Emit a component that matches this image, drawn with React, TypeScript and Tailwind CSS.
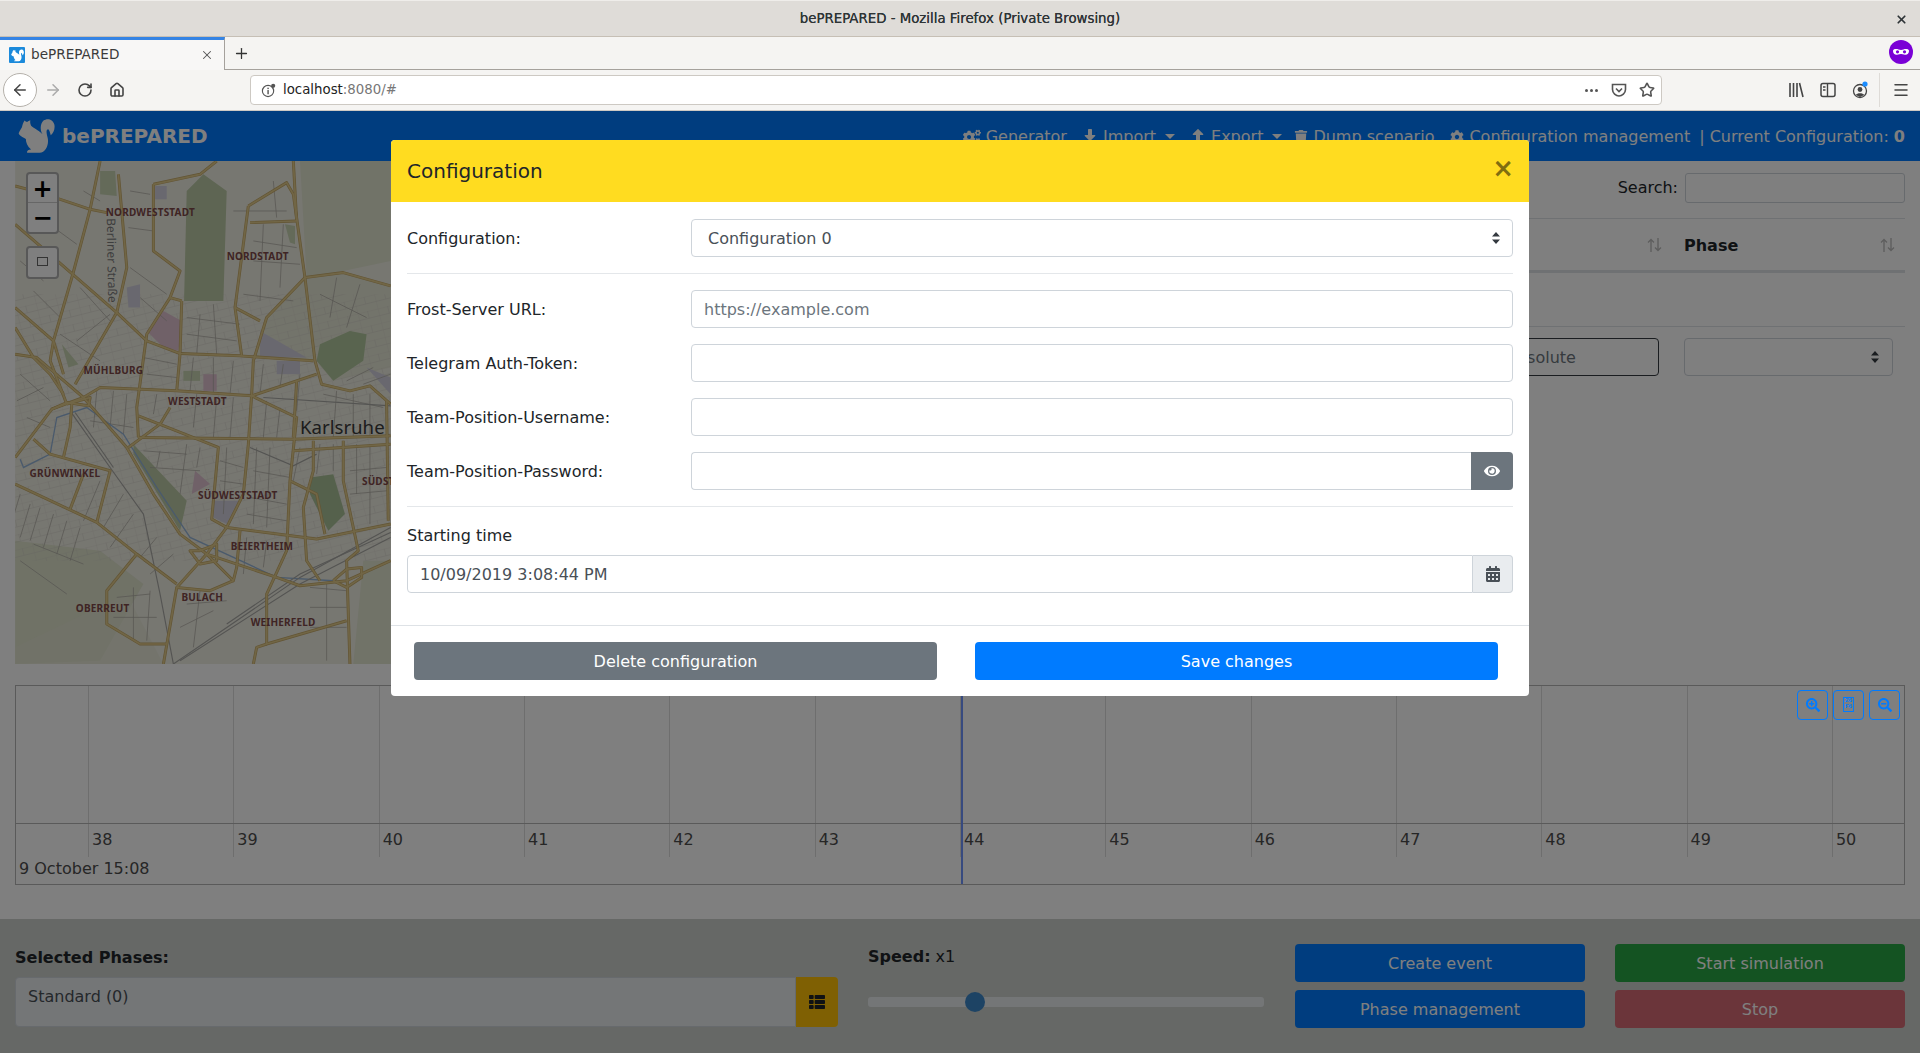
import React from "react";
import { ArrowLeft, ArrowRight, RotateCw, Home, X, Plus, Menu, Star } from "lucide-react";
import { FaCogs, FaDownload, FaUpload, FaTrash, FaCog, FaEye, FaCalendarAlt, FaSearchPlus, FaSearchMinus, FaThList } from "react-icons/fa";

const Squirrel = ({ className = "", fill = "#fff" }: { className?: string; fill?: string }) => (
  <svg viewBox="22 22 113 110" className={className}>
    <path fill={fill} d="M103 78C88 68 88 40 100 30C110 22 128 24 133 42C136 55 130 70 122 75C120 65 118 58 114 56C108 56 108 66 112 80C118 100 108 128 88 128L50 128C48 124 52 118 62 118C50 108 46 96 46 86C40 84 30 78 25 72C22 68 28 60 34 50C36 42 38 36 42 30C46 34 48 34 50 34C54 32 56 30 60 30C58 36 60 40 62 46C70 54 90 62 103 78Z" />
  </svg>
);

const mainRoads = [
  "300,0 270,145 218,340 160,540 150,600 200,730",
  "45,75 120,95 270,145 320,155",
  "355,40 380,320 350,455 225,670",
  "45,190 218,340 350,455 440,540 540,578 720,585 940,600",
  "460,70 460,270 540,330 510,410 440,520 410,740 415,830",
  "460,70 600,40 650,0",
  "545,420 540,578 530,690",
  "510,410 545,420",
  "745,135 705,440 725,585",
  "705,440 780,480",
  "745,135 860,65 880,100 915,350 945,600 965,670 1050,690 1110,675 1172,730",
  "750,185 890,180",
  "880,0 890,180",
  "915,350 1030,335 1172,375",
  "915,350 800,470 760,600 755,700 745,850 730,1000 680,1100 620,1180 530,1280 490,1510",
  "250,710 300,680 530,690 755,705 950,640",
  "45,580 110,590 250,710 155,745 45,890",
  "250,710 380,860 460,1000 540,1120 620,1180 830,1250 900,1275 1040,1260 1172,1200",
  "385,860 480,790 510,740",
  "415,830 880,835 1172,825",
  "415,765 655,860 635,1075 680,1100 950,1135 1172,1090",
  "755,705 890,770 870,960 860,1170 800,1300 800,1450 1040,1380",
  "890,660 880,830",
  "45,970 290,1085 410,1180 530,1270",
  "100,835 150,880 330,930 290,1085",
  "250,940 210,1045",
  "410,1180 320,1290 320,1390 420,1450 500,1450",
  "870,960 950,1000 975,1120",
  "940,840 940,930 910,1040 920,1200 960,1260",
  "1030,840 1030,960 1075,1170 1040,1200 1050,1510",
  "1160,720 1165,1080",
  "880,870 1172,850",
  "45,500 100,590 150,640 190,700",
  "45,440 160,540 190,640",
  "215,730 210,800 190,890",
  "620,1180 700,1260 710,1220 720,1110",
  "700,1260 630,1290 530,1280",
  "760,1510 770,1460 800,1450",
  "1000,1260 1040,1225 1085,1220 1085,1250 1040,1280 1000,1260",
  "155,745 200,725 265,735 270,710 200,730",
  "600,1170 650,1150 650,1200 600,1210 570,1170 600,1170",
];
const minor = [
  "250,90 300,120","120,170 230,250","60,300 130,360","100,390 180,470","240,380 330,480","180,520 300,600","230,540 330,460",
  "390,90 450,100","385,200 460,210","390,320 500,400","420,410 500,480","560,470 720,490","560,520 710,540","640,430 650,580",
  "600,460 590,580","700,150 860,150","760,240 890,260","760,300 900,310","730,400 880,420","820,60 830,170","790,190 780,420","850,190 840,380",
  "430,590 530,610","440,640 530,650","580,590 570,690","640,590 640,700","700,600 690,700","790,610 780,700","850,610 840,680","900,640 890,750",
  "290,690 280,800","340,690 330,800","380,700 370,820","270,780 400,800","60,640 150,720","50,720 130,680","80,770 150,800",
  "430,870 560,880","450,920 600,930","560,850 540,1000","600,860 590,920","480,870 470,920","660,900 730,920","660,960 730,970","680,860 670,1060",
  "770,860 760,1090","810,860 800,1100","760,930 870,950","750,1010 860,1030","740,1060 860,1080","900,860 880,960","960,850 950,940","1000,850 1000,930","1070,850 1070,1000","1110,850 1110,1090","1050,930 1160,920","1050,1000 1160,990",
  "60,1000 30,1100","90,1030 60,1130","120,1040 90,1140","160,1060 130,1160","200,1080 170,1180","240,1100 210,1200","100,1150 250,1210","300,960 250,1080","370,1000 310,1100","400,1060 330,1160","60,1200 200,1300",
  "430,1200 520,1260","470,1130 420,1190","520,1180 450,1240","350,1310 450,1300","340,1370 470,1370","400,1280 400,1440","450,1290 440,1440",
  "560,1330 680,1320","540,1400 640,1350","600,1290 580,1460","740,1130 730,1240","800,1140 790,1220","930,1280 1040,1290","930,1340 1040,1340","930,1400 1040,1400","980,1270 980,1500",
  "960,400 1100,470","1010,350 990,470","1080,370 1040,500","1120,620 1040,660","1172,640 1090,670","970,700 1150,740","1010,690 1000,830","1060,700 1060,830","1110,700 1110,830","800,720 790,830","840,740 830,830","650,710 640,830","700,710 690,830","590,700 580,800","470,700 460,760",
];
const rails = ["210,750 330,920 430,1060 480,1300 520,1510", "225,755 340,920", "520,1510 900,1250 1172,1100", "540,1500 900,1270 1172,1130", "680,1390 900,1240 1172,1115", "790,710 1172,735", "750,860 880,915 950,880"];

const MapLabel = ({ x, y, t }: { x: number; y: number; t: string }) => (
  <text x={x} y={y} fontFamily="'Noto Sans', sans-serif" fontWeight="700" fontSize="30" letterSpacing="0.6" fill="#7e4848">{t}</text>
);

const MapDrawing = () => (
  <svg viewBox="45 0 1500 1510" className="block w-[500px] h-[503px]">
    <defs>
      <pattern id="s1" width="62" height="44" patternUnits="userSpaceOnUse" patternTransform="rotate(-14)">
        <path d="M0 0H62M0 22H62M0 0V44M31 0V22" stroke="#cbc9c0" strokeWidth="2" fill="none" />
      </pattern>
    </defs>
    <rect x="45" width="1500" height="1510" fill="#efeee3" />
    <path d="M45 1140L300 1170L430 1270L300 1500L45 1510Z" fill="#e0e4cd" />
    <path d="M900 0H1172V300L1030 330L920 350Z" fill="#e2e6d1" />
    <path d="M800 470L915 350L1030 335L1172 375V620L1000 660L945 600L760 590Z" fill="#e7e8d7" />
    <path d="M1090 1200H1172V1510H1060Z" fill="#e2e6d1" />
    <path d="M380 1300L490 1510H45V1460Z" fill="#e4e6d2" opacity="0.6" />
    <rect x="45" y="400" width="1127" height="800" fill="url(#s1)" opacity="0.55" />
    <path d="M560 90L610 40L680 90L670 420L552 420Z" fill="#bccba6" />
    <path d="M950 600L960 550L1050 510L1100 520L1090 600L1000 660Z" fill="#b2c89e" />
    <path d="M400 850L560 1020L540 1110L400 880Z" fill="#bccba6" />
    <path d="M930 950L1000 940L1035 1060L985 1110L930 1000Z" fill="#abc299" />
    <path d="M300 30L345 30L350 105L300 100Z" fill="#c8d4b3" />
    <path d="M185 550L235 610L205 620Z" fill="#c8d4b3" />
    <path d="M855 190L885 195L885 250L870 245Z" fill="#c8d4b3" />
    <path d="M550 630H600V660H550Z" fill="#c8d4b3" />
    <path d="M440 510L490 450L545 480L535 570L490 560Z" fill="#e0c2d1" />
    <path d="M610 640H650V690H610Z" fill="#e0c2d1" />
    <path d="M585 930L630 970L575 1000Z" fill="#e0c2d1" />
    <path d="M640 1020H720L680 1090L640 1070Z" fill="#d3d1de" />
    <path d="M780 510L920 590L780 590Z" fill="#d3d1de" />
    <path d="M830 600H900V640H830Z" fill="#d3d1de" />
    <path d="M1100 620L1172 650V700Z" fill="#d3d1de" />
    <path d="M380 380L420 370L420 440L385 440Z" fill="#d3d1de" />
    <path d="M465 75H500V115H465Z" fill="#d3d1de" />
    {minor.map((p) => (
      <polyline key={p} points={p} fill="none" stroke="#aeaca3" strokeWidth="2.2" />
    ))}
    <polyline points="60,895 70,920 150,880 170,770 260,740 370,820 470,980 570,1130 830,1250 1000,1260" fill="none" stroke="#94b4d8" strokeWidth="4" />
    {rails.map((p) => (
      <polyline key={p} points={p} fill="none" stroke="#a9a9a5" strokeWidth="3.5" />
    ))}
    {mainRoads.map((p) => (
      <polyline key={p} points={p} fill="none" stroke="#c4a968" strokeWidth="9" strokeLinejoin="round" />
    ))}
    {mainRoads.map((p) => (
      <polyline key={`i${p}`} points={p} fill="none" stroke="#e3cc8c" strokeWidth="5" strokeLinejoin="round" />
    ))}
    <MapLabel x={317} y={165} t="NORDWESTSTADT" />
    <MapLabel x={680} y={298} t="NORDSTADT" />
    <MapLabel x={250} y={640} t="MÜHLBURG" />
    <MapLabel x={504} y={731} t="WESTSTADT" />
    <MapLabel x={88} y={948} t="GRÜNWINKEL" />
    <MapLabel x={594} y={1014} t="SÜDWESTSTADT" />
    <MapLabel x={1086} y={974} t="SÜDSTADT" />
    <MapLabel x={692} y={1169} t="BEIERTHEIM" />
    <MapLabel x={544} y={1320} t="BULACH" />
    <MapLabel x={227} y={1355} t="OBERREUT" />
    <MapLabel x={752} y={1397} t="WEIHERFELD" />
    <text x="900" y="821" fontFamily="'Noto Sans', sans-serif" fontSize="56" fill="#3a3a3a">Karlsruhe</text>
    <text transform="translate(320 172) rotate(89)" fontFamily="'Noto Sans', sans-serif" fontSize="36" fill="#7c7c7c">Berliner Straße</text>
  </svg>
);

const SortArrows = () => (
  <svg viewBox="0 0 15 14" className="w-[15px] h-[14px]">
    <path d="M4 14V1.5M1 4.5L4 1.5L7 4.5" fill="none" stroke="#bdbdbd" strokeWidth="1.4" />
    <path d="M11 0V12.5M8 9.5L11 12.5L14 9.5" fill="none" stroke="#bdbdbd" strokeWidth="1.4" />
  </svg>
);

const SelectArrows = () => (
  <svg viewBox="0 0 8 12" className="w-[8px] h-[12px]">
    <path d="M4 0L8 4.5H0Z M4 12L0 7.5H8Z" fill="#343a40" />
  </svg>
);

const NavItem = ({ icon, label, caret, className = "" }: { icon: React.ReactNode; label: string; caret?: boolean; className?: string }) => (
  <span className={`flex items-center gap-[5px] ${className}`}>
    {icon}
    <span>{label}</span>
    {caret && <span className="ml-[4px] w-0 h-0 border-x-[5px] border-x-transparent border-t-[5px] border-t-white" />}
  </span>
);

const FormRow = ({ label, children }: { label: string; children: React.ReactNode }) => (
  <div className="flex items-center h-[38px]">
    <label className="w-[284px] shrink-0 pt-[2px]">{label}</label>
    {children}
  </div>
);

const fieldClass = "flex-1 min-w-0 h-[38px] border border-[#ced4da] rounded-[4px] px-[12px] pt-[1px] text-[#495057] placeholder:text-[#6c757d] bg-white outline-none";

const TICKS = [38, 39, 40, 41, 42, 43, 44, 45, 46, 47, 48, 49, 50];

export default function App() {
  return (
    <div className="relative w-[1920px] h-[1053px] overflow-hidden flex flex-col bg-white text-[16px] text-[#212529] font-['DejaVu_Sans',sans-serif]">
      {/* Firefox title bar */}
      <div className="relative h-[37px] shrink-0 bg-[#dfdcd8] border-t border-[#efedea] border-b border-b-[#c6bfb5] flex items-center justify-center text-[13.33px] text-[#2e3436]">
        <span className="[text-shadow:0_0_0.6px_#2e3436]">bePREPARED - Mozilla Firefox (Private Browsing)</span>
        <X className="absolute right-[12px] top-[12px] w-[13px] h-[13px] text-[#2e3436]" strokeWidth={3.2} />
      </div>
      {/* Tab strip */}
      <div className="h-[33px] shrink-0 bg-[#f5f4f2] flex items-stretch">
        <div className="w-[225px] bg-[#f8f7f6] border-t-[3px] border-[#3584e4] border-r border-r-[#a5a19c] flex items-center pl-[9px] pr-[10px] text-[13.6px] text-[#3b3b3b]">
          <span className="w-[16px] h-[16px] bg-[#1c8adb] rounded-[1px] flex items-center justify-center">
            <Squirrel className="w-[13px] h-[13px]" />
          </span>
          <span className="ml-[6px] flex-1 -mt-[2px]">bePREPARED</span>
          <X className="w-[14px] h-[14px] text-[#555]" strokeWidth={1.8} />
        </div>
        <div className="flex-1 border-b border-[#a5a19c] flex items-center pl-[8px] relative">
          <Plus className="w-[17px] h-[17px] text-[#333]" strokeWidth={1.8} />
          <svg viewBox="0 0 24 24" className="absolute right-[7px] top-[3px] w-[24px] h-[24px]">
            <circle cx="12" cy="12" r="12" fill="#7a00d6" />
            <path d="M4 11C4 9 7 8.5 9.5 9.5C11 10 13 10 14.5 9.5C17 8.5 20 9 20 11C20 14 17.5 15.5 15 14.5C13.5 13.8 10.5 13.8 9 14.5C6.5 15.5 4 14 4 11Z" fill="#fff" />
            <circle cx="8.5" cy="11.8" r="1.6" fill="#7a00d6" />
            <circle cx="15.5" cy="11.8" r="1.6" fill="#7a00d6" />
          </svg>
        </div>
      </div>
      {/* Toolbar */}
      <div className="h-[41px] shrink-0 bg-[#f5f4f2] border-b border-[#cdc9c3] flex items-center relative">
        <span className="ml-[3px] w-[34px] h-[34px] rounded-full border border-[#b5b1ab] bg-white flex items-center justify-center">
          <ArrowLeft className="w-[18px] h-[18px] text-[#444]" strokeWidth={2} />
        </span>
        <ArrowRight className="ml-[7px] w-[18px] h-[18px] text-[#aaa]" strokeWidth={2} />
        <RotateCw className="ml-[15px] w-[16px] h-[16px] text-[#444]" strokeWidth={2.4} />
        <Home className="ml-[16px] w-[16px] h-[16px] text-[#444]" strokeWidth={2.4} />
        <div className="ml-[125px] w-[1412px] h-[30px] bg-white border border-[#cdc9c3] rounded-[4px] flex items-center pl-[10px] pr-[6px] text-[13.33px]">
          <svg viewBox="0 0 16 16" className="w-[15px] h-[15px]">
            <circle cx="7.5" cy="8.5" r="6" fill="none" stroke="#555" strokeWidth="1.2" />
            <rect x="6.8" y="7.5" width="1.5" height="4.5" fill="#555" />
            <rect x="6.8" y="5" width="1.5" height="1.5" fill="#555" />
            <circle cx="13" cy="3" r="2.2" fill="#555" />
          </svg>
          <span className="ml-[7px] text-[#222]">localhost<span className="text-[#777]">:8080/#</span></span>
          <span className="flex-1" />
          <span className="flex gap-[2px]">
            <i className="w-[3px] h-[3px] rounded-full bg-[#555]" />
            <i className="w-[3px] h-[3px] rounded-full bg-[#555]" />
            <i className="w-[3px] h-[3px] rounded-full bg-[#555]" />
          </span>
          <svg viewBox="0 0 16 16" className="ml-[13px] w-[16px] h-[16px]">
            <path d="M1.5 2.5H14.5V7.5C14.5 11 11 14 8 14C5 14 1.5 11 1.5 7.5Z" fill="none" stroke="#555" strokeWidth="1.6" />
            <path d="M5 6.5L8 9.5L11 6.5" fill="none" stroke="#555" strokeWidth="1.6" />
          </svg>
          <Star className="ml-[12px] w-[16px] h-[16px] text-[#555]" strokeWidth={2.4} />
        </div>
        <svg viewBox="0 0 16 16" className="absolute left-[1788px] top-[12px] w-[16px] h-[16px]">
          <path d="M2 1V15M5.5 1V15M9 1V15M11.5 1L15 15" fill="none" stroke="#444" strokeWidth="1.6" />
        </svg>
        <svg viewBox="0 0 16 16" className="absolute left-[1820px] top-[12px] w-[16px] h-[16px]">
          <rect x="1" y="1.5" width="14" height="13" rx="2" fill="none" stroke="#444" strokeWidth="1.5" />
          <path d="M7.5 1.5V14.5M3 5H5.5M3 8H5.5" stroke="#444" strokeWidth="1.4" />
        </svg>
        <svg viewBox="0 0 16 18" className="absolute left-[1852px] top-[11px] w-[16px] h-[18px]">
          <circle cx="8" cy="10" r="6.5" fill="none" stroke="#444" strokeWidth="1.3" />
          <circle cx="8" cy="8.5" r="2.4" fill="#444" />
          <path d="M3.8 14C5 11.5 11 11.5 12.2 14L8 16Z" fill="#444" />
          <circle cx="13" cy="3" r="2.6" fill="#1a8cff" />
        </svg>
        <span className="absolute left-[1879px] top-[3px] h-[34px] w-px bg-[#dedbd7]" />
        <Menu className="absolute left-[1892px] top-[11px] w-[18px] h-[18px] text-[#444]" strokeWidth={2} />
      </div>

      {/* App navbar */}
      <nav className="h-[50px] shrink-0 bg-[#007bff] flex items-center text-white">
        <Squirrel className="ml-[18px] w-[37px] h-[36px]" />
        <span className="ml-[7px] text-[20px] font-bold">bePREPARED</span>
        <div className="ml-auto pr-[15px] pt-[1px] flex items-center">
          <NavItem icon={<FaCogs className="w-[18px] h-[16px]" />} label="Generator" />
          <NavItem className="ml-[15px]" icon={<FaDownload className="w-[16px] h-[16px]" />} label="Import" caret />
          <NavItem className="ml-[15px]" icon={<FaUpload className="w-[16px] h-[16px]" />} label="Export" caret />
          <NavItem className="ml-[12px]" icon={<FaTrash className="w-[14px] h-[14px]" />} label="Dump scenario" />
          <NavItem className="ml-[16px]" icon={<FaCog className="w-[14px] h-[14px]" />} label="Configuration management" />
          <span className="ml-[9px]">| Current Configuration: <b>0</b></span>
        </div>
      </nav>

      {/* Main area */}
      <main className="flex-1 flex flex-col min-h-0 px-[15px]">
        <div className="h-[503px] flex shrink-0">
          <div className="relative w-[500px] shrink-0">
            <MapDrawing />
            <div className="absolute left-[11px] top-[11px] w-[33px] flex flex-col bg-white border-2 border-[#b0b0b0] rounded-[4px]">
              <span className="h-[29px] pt-[1px] flex items-center justify-center text-[24px] font-bold text-black border-b border-[#ccc] leading-none">+</span>
              <span className="h-[29px] pt-[1px] flex items-center justify-center text-[24px] font-bold text-black leading-none">−</span>
            </div>
            <div className="absolute left-[11px] top-[85px] w-[33px] h-[33px] bg-white border-2 border-[#b0b0b0] rounded-[4px] flex items-center justify-center">
              <span className="w-[11px] h-[9px] -mt-[3px] border border-[#666]" />
            </div>
          </div>
          <div className="flex-1 flex flex-col">
            <div className="h-[58px] flex items-start justify-end pt-[12px] border-b border-[#dee2e6]">
              <span className="mr-[7px] leading-[30px]">Search:</span>
              <input aria-label="Search" className="w-[220px] h-[30px] border border-[#ced4da] rounded-[3px] bg-white" />
            </div>
            <div className="h-[54px] border-b-[3px] border-[#dee2e6] flex items-center justify-end">
              <span className="mr-[22px]"><SortArrows /></span>
              <span className="w-[196px] font-bold pt-[3px]">Phase</span>
              <span className="mr-[10px]"><SortArrows /></span>
            </div>
            <div className="h-[54px] border-b border-[#dee2e6]" />
            <div className="flex justify-end items-center pt-[11px] gap-[25px] pr-[12px]">
              <span className="w-[204px] h-[38px] border border-[#343a40] rounded-[4px] flex items-center pl-[50px] pt-[1px] text-[#6c757d]">Absolute</span>
              <span className="w-[209px] h-[38px] border border-[#ced4da] rounded-[4px] flex items-center justify-end pr-[13px]"><SelectArrows /></span>
            </div>
          </div>
        </div>

        {/* Timeline */}
        <div className="relative mt-[21px] h-[200px] border border-[#b5b5b5] flex flex-col shrink-0 overflow-hidden">
          <div className="h-[138px] flex border-b border-[#b5b5b5] shrink-0">
            <div className="w-[72px] shrink-0" />
            {TICKS.map((t) => (
              <div key={t} className="w-[145.33px] shrink-0 border-l border-[#dcdcdc]" />
            ))}
          </div>
          <div className="h-[33px] flex shrink-0">
            <div className="w-[72px] shrink-0" />
            {TICKS.map((t) => (
              <div key={t} className="w-[145.33px] shrink-0 border-l border-[#dcdcdc] pl-[3px] pt-[4px] text-[#4d4d4d]">{t}</div>
            ))}
          </div>
          <div className="pl-[3px] text-[#4d4d4d] leading-[24px]">9 October 15:08</div>
          <span className="absolute left-[945px] top-0 bottom-0 w-[2px] bg-[#6e94ff]" />
        </div>

        <div className="flex-1" />
      </main>

      {/* Bottom bar */}
      <footer className="h-[134px] shrink-0 bg-[#ccd0cc] flex px-[15px]">
        <div className="w-[823px] pt-[26px]">
          <div className="font-bold leading-[24px] pt-[1px] h-[24px]">Selected Phases:</div>
          <div className="mt-[8px] h-[50px] flex">
            <div className="flex-1 bg-[#e9ecef] border border-[#ced4da] rounded-l-[4px] pl-[12px] pt-[7px] text-[#495057]">Standard (0)</div>
            <button className="w-[42px] bg-[#ffc107] rounded-r-[4px] flex items-center justify-center">
              <FaThList className="w-[16px] h-[16px] text-[#212529]" />
            </button>
          </div>
        </div>
        <div className="ml-[30px] w-[396px] pt-[26px]">
          <div className="leading-[24px]"><b>Speed:</b> x1</div>
          <div className="mt-[23px] h-[20px] relative flex items-center">
            <div className="w-full h-[10px] bg-[#e9ecef] rounded-[3px]" />
            <span className="absolute left-[97px] top-0 w-[20px] h-[20px] rounded-full bg-[#3b86c8]" />
          </div>
        </div>
        <div className="ml-[31px] w-[290px] pt-[25px] flex flex-col gap-[8px]">
          <button className="h-[38px] pt-[1px] rounded-[4px] bg-[#007bff] text-white">Create event</button>
          <button className="h-[38px] pt-[1px] rounded-[4px] bg-[#007bff] text-white">Phase management</button>
        </div>
        <div className="ml-[30px] w-[290px] pt-[25px] flex flex-col gap-[8px]">
          <button className="h-[38px] pt-[1px] rounded-[4px] bg-[#28a745] text-white">Start simulation</button>
          <button className="h-[38px] pt-[1px] rounded-[4px] bg-[#d66b75] text-white">Stop</button>
        </div>
      </footer>

      {/* Backdrop */}
      <div className="absolute left-0 right-0 top-[111px] bottom-0 bg-black/50" />

      {/* Timeline zoom buttons above the backdrop */}
      <div className="absolute left-[1797px] top-[690px] flex gap-[5px] text-[#007bff]">
        <span className="w-[31px] h-[30px] border border-[#007bff] rounded-[4px] flex items-center justify-center"><FaSearchPlus className="w-[14px] h-[14px]" /></span>
        <span className="w-[31px] h-[30px] border border-[#007bff] rounded-[4px] flex items-center justify-center">
          <span className="w-[11px] h-[15px] -mt-[2px] border border-[#007bff] flex flex-col items-center justify-center text-[6px] leading-[6px] font-bold font-['Liberation_Mono',monospace]"><span>26</span><span>F6</span></span>
        </span>
        <span className="w-[31px] h-[30px] border border-[#007bff] rounded-[4px] flex items-center justify-center"><FaSearchMinus className="w-[14px] h-[14px]" /></span>
      </div>

      {/* Modal */}
      <div className="absolute left-[391px] top-[140px] w-[1138px] h-[556px] bg-white rounded-[4px] overflow-hidden flex flex-col">
        <div className="h-[62px] shrink-0 bg-[#ffdc20] flex items-center justify-between pl-[16px] pr-[15px]">
          <h5 className="text-[20px]">Configuration</h5>
          <span className="text-[26px] font-bold text-black/50 leading-none -mt-[6px]">×</span>
        </div>
        <div className="px-[16px] pt-[17px] flex-1">
          <FormRow label="Configuration:">
            <div className="relative flex-1">
              <select aria-label="Configuration" defaultValue="0" className="w-full h-[38px] appearance-none border border-[#ced4da] rounded-[4px] pl-[16px] pt-[1px] text-[#495057] bg-white outline-none">
                <option value="0">Configuration 0</option>
              </select>
              <span className="absolute right-[13px] top-[13px] flex"><SelectArrows /></span>
            </div>
          </FormRow>
          <div className="mt-[16px] h-px bg-[#e4e7ea]" />
          <div className="mt-[16px] flex flex-col gap-[16px]">
            <FormRow label="Frost-Server URL:"><input className={fieldClass} placeholder="https://example.com" /></FormRow>
            <FormRow label="Telegram Auth-Token:"><input aria-label="Telegram Auth-Token" className={fieldClass} /></FormRow>
            <FormRow label="Team-Position-Username:"><input aria-label="Team-Position-Username" className={fieldClass} /></FormRow>
            <FormRow label="Team-Position-Password:">
              <input aria-label="Team-Position-Password" type="password" className={`${fieldClass} rounded-r-none border-r-0`} />
              <button className="w-[42px] h-[38px] bg-[#6c757d] rounded-r-[4px] flex items-center justify-center text-white"><FaEye className="w-[16px] h-[16px]" /></button>
            </FormRow>
          </div>
          <div className="mt-[16px] h-px bg-[#e4e7ea]" />
          <div className="mt-[17px] leading-[24px]">Starting time</div>
          <div className="mt-[7px] flex">
            <input aria-label="Starting time" defaultValue="10/09/2019 3:08:44 PM" className={`${fieldClass} rounded-r-none`} />
            <span className="w-[40px] h-[38px] bg-[#e9ecef] border border-l-0 border-[#ced4da] rounded-r-[4px] flex items-center justify-center text-[#495057]"><FaCalendarAlt className="w-[14px] h-[16px]" /></span>
          </div>
        </div>
        <div className="border-t border-[#dee2e6] pt-[16px] pb-[16px] pl-[23px] pr-[31px] flex gap-[38px]">
          <button className="flex-1 h-[38px] pt-[1px] bg-[#6c757d] text-white rounded-[4px]">Delete configuration</button>
          <button className="flex-1 h-[38px] pt-[1px] bg-[#007bff] text-white rounded-[4px]">Save changes</button>
        </div>
      </div>
    </div>
  );
}
